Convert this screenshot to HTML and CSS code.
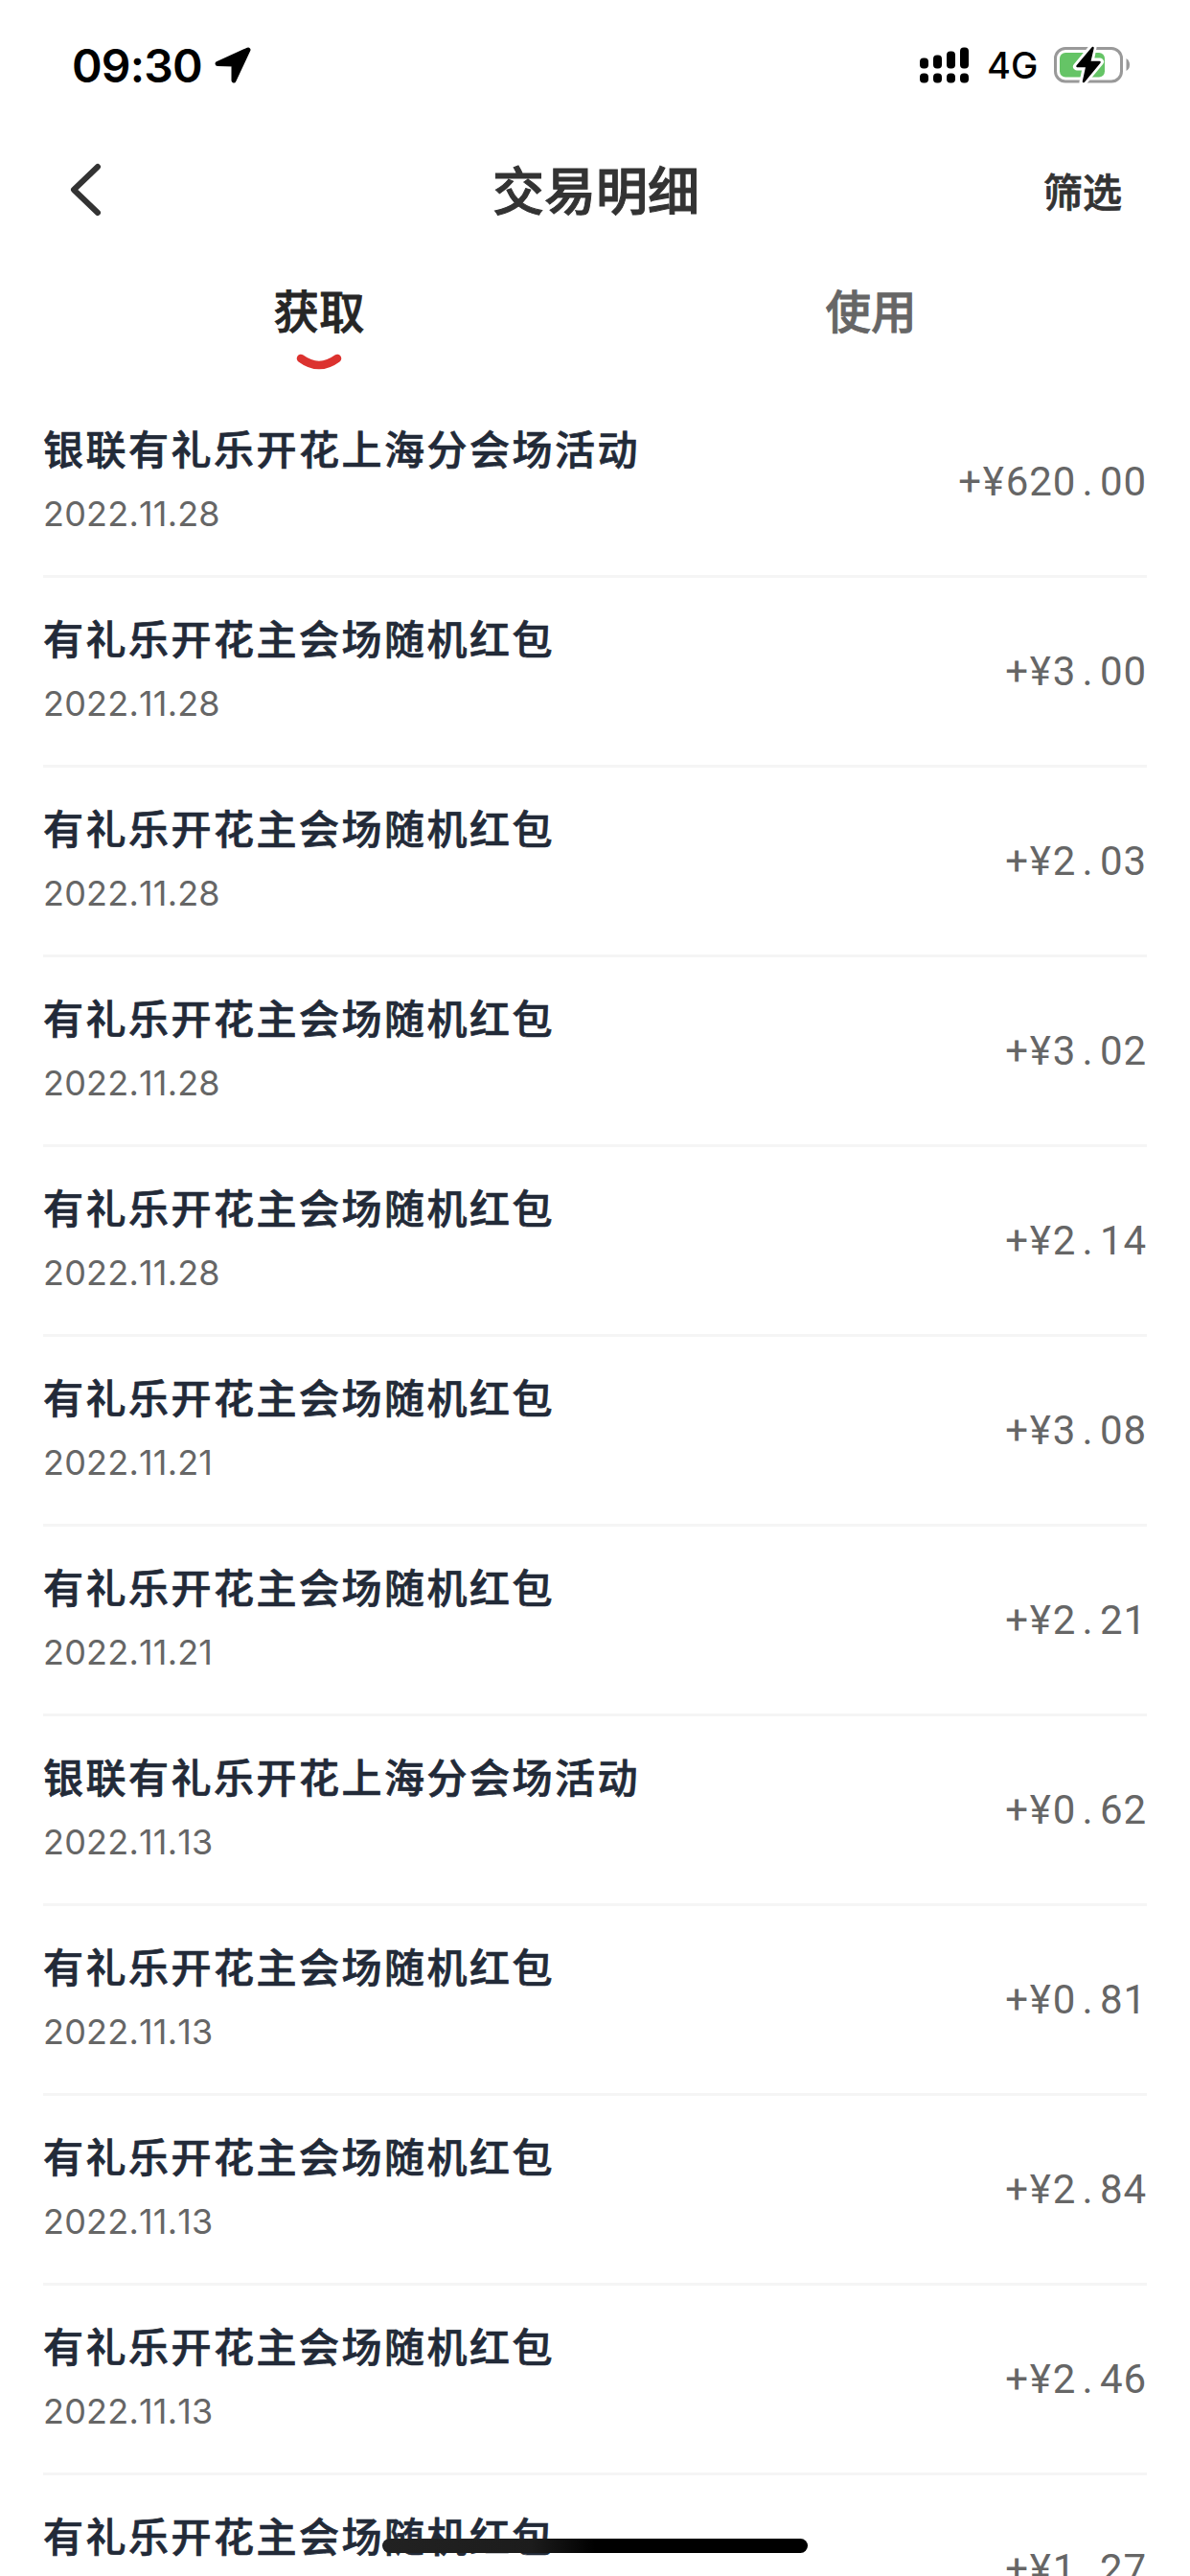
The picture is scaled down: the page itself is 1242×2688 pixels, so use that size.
FILE: index.html
```html
<!DOCTYPE html>
<html lang="zh-CN">
<head>
    <meta charset="UTF-8">
    <meta name="viewport" content="width=device-width, initial-scale=1.0">
    <title>交易明细</title>
    <link rel="stylesheet" href="styles.css">
</head>
<body>
    <div class="page">
        <div class="status-bar">
            <span class="time">09:30</span>
            <svg class="location" width="38" height="38" viewBox="0 0 38 38">
                <path d="M35 3 L20 35 L20 18 L3 17.5 Z" stroke="#000" stroke-width="5" stroke-linejoin="round"/>
            </svg>
            <svg class="signal" width="52" height="38" viewBox="0 0 52 38">
                <rect x="0" y="11.5" width="9" height="11" rx="4"/>
                <rect x="14" y="8.5" width="9" height="14" rx="4"/>
                <rect x="28" y="4.5" width="9" height="18" rx="4"/>
                <rect x="42" y="0.5" width="9" height="22" rx="4"/>
                <rect x="0" y="27.5" width="9" height="10" rx="4"/>
                <rect x="14" y="27.5" width="9" height="10" rx="4"/>
                <rect x="28" y="27.5" width="9" height="10" rx="4"/>
                <rect x="42" y="27.5" width="9" height="10" rx="4"/>
            </svg>
            <span class="network">4G</span>
            <svg class="battery" width="80" height="40" viewBox="0 0 80 40">
                <rect x="1.5" y="2.5" width="69" height="34.5" rx="10.5" fill="none" stroke="#999" stroke-width="3"/>
                <path d="M75.5 13 Q79 15 79 19.5 Q79 24 75.5 26 Z" fill="#999"/>
                <rect x="6" y="7" width="47" height="25.5" rx="6" fill="#65c466"/>
                <path d="M40.5 1.5 L24 21.5 L34 21.5 L30.5 37.5 L48 16.5 L37.5 16.5 Z" fill="#fff" stroke="#fff" stroke-width="8" stroke-linejoin="round"/>
                <path d="M40.5 2 L24.5 21 L34.5 21 L31 37 L47.5 17 L37 17 Z" stroke="#000" stroke-width="2.5" stroke-linejoin="round"/>
            </svg>
        </div>

        <div class="header">
            <svg class="back" width="34" height="58" viewBox="0 0 34 58">
                <path d="M29 5 L4 29 L29 53" fill="none" stroke="#333" stroke-width="6" stroke-linecap="round" stroke-linejoin="round"/>
            </svg>
            <h1>交易明细</h1>
            <span class="filter">筛选</span>
        </div>

        <div class="tabs">
            <div class="tab active">
                <span>获取</span>
                <svg width="48" height="20" viewBox="0 0 48 20">
                    <path d="M5 5 Q24 19 43 5" fill="none" stroke="#dc322f" stroke-width="8.5" stroke-linecap="round"/>
                </svg>
            </div>
            <div class="tab"><span>使用</span></div>
        </div>

        <ul class="list">
            <li class="item">
                <div class="info"><div class="name">银联有礼乐开花上海分会场活动</div><div class="date">2022.11.28</div></div>
                <div class="amount">+<i>¥</i>620<i>.</i>00</div>
            </li>
            <li class="item">
                <div class="info"><div class="name">有礼乐开花主会场随机红包</div><div class="date">2022.11.28</div></div>
                <div class="amount">+<i>¥</i>3<i>.</i>00</div>
            </li>
            <li class="item">
                <div class="info"><div class="name">有礼乐开花主会场随机红包</div><div class="date">2022.11.28</div></div>
                <div class="amount">+<i>¥</i>2<i>.</i>03</div>
            </li>
            <li class="item">
                <div class="info"><div class="name">有礼乐开花主会场随机红包</div><div class="date">2022.11.28</div></div>
                <div class="amount">+<i>¥</i>3<i>.</i>02</div>
            </li>
            <li class="item">
                <div class="info"><div class="name">有礼乐开花主会场随机红包</div><div class="date">2022.11.28</div></div>
                <div class="amount">+<i>¥</i>2<i>.</i>14</div>
            </li>
            <li class="item">
                <div class="info"><div class="name">有礼乐开花主会场随机红包</div><div class="date">2022.11.21</div></div>
                <div class="amount">+<i>¥</i>3<i>.</i>08</div>
            </li>
            <li class="item">
                <div class="info"><div class="name">有礼乐开花主会场随机红包</div><div class="date">2022.11.21</div></div>
                <div class="amount">+<i>¥</i>2<i>.</i>21</div>
            </li>
            <li class="item">
                <div class="info"><div class="name">银联有礼乐开花上海分会场活动</div><div class="date">2022.11.13</div></div>
                <div class="amount">+<i>¥</i>0<i>.</i>62</div>
            </li>
            <li class="item">
                <div class="info"><div class="name">有礼乐开花主会场随机红包</div><div class="date">2022.11.13</div></div>
                <div class="amount">+<i>¥</i>0<i>.</i>81</div>
            </li>
            <li class="item">
                <div class="info"><div class="name">有礼乐开花主会场随机红包</div><div class="date">2022.11.13</div></div>
                <div class="amount">+<i>¥</i>2<i>.</i>84</div>
            </li>
            <li class="item">
                <div class="info"><div class="name">有礼乐开花主会场随机红包</div><div class="date">2022.11.13</div></div>
                <div class="amount">+<i>¥</i>2<i>.</i>46</div>
            </li>
            <li class="item">
                <div class="info"><div class="name">有礼乐开花主会场随机红包</div></div>
                <div class="amount">+<i>¥</i>1<i>.</i>27</div>
            </li>
        </ul>

        <div class="home-indicator"></div>
    </div>
</body>
</html>
```

FILE: styles.css
```css
* {
    box-sizing: border-box;
}
body {
    margin: 0;
    background: #fff;
    font-family: "Inter", "Noto Sans CJK SC", sans-serif;
}
.page {
    position: relative;
    width: 1242px;
    height: 2688px;
    overflow: hidden;
}

/* Status bar */
.status-bar {
    display: flex;
    align-items: center;
    height: 136px;
    padding: 0 62px 0 75px;
}
.time {
    width: 149px;
    font-size: 48px;
    font-weight: 600;
    letter-spacing: -0.8px;
    white-space: nowrap;
}
.signal {
    margin-left: auto;
}
.network {
    width: 70px;
    margin-left: 18px;
    font-size: 38px;
    font-weight: 500;
}

/* Title row */
.header {
    display: grid;
    grid-template-columns: 1fr auto 1fr;
    align-items: center;
    height: 128px;
    padding: 0 71px 4px 73px;
    color: #333;
    font-family: "Noto Sans CJK SC", sans-serif;
}
.header h1 {
    margin: 0 0 3px;
    font-size: 54px;
    line-height: 80px;
    font-weight: 500;
    -webkit-text-stroke: 1px #333;
}
.filter {
    justify-self: end;
    font-size: 41px;
    line-height: 60px;
    font-weight: 500;
    -webkit-text-stroke: 0.8px #333;
}

/* Tabs */
.tabs {
    display: grid;
    grid-template-columns: 1fr 1fr;
    height: 141px;
    padding: 24px 45px 0;
}
.tab {
    display: flex;
    flex-direction: column;
    align-items: center;
    color: #666;
    font-family: "Noto Sans CJK SC", sans-serif;
    font-size: 47.5px;
    line-height: 70px;
    font-weight: 500;
    -webkit-text-stroke: 0.8px currentColor;
}
.tab svg {
    margin-top: 11px;
}
.active {
    color: #262626;
}

/* Transactions */
.list {
    margin: 0;
    padding: 0 45px;
    list-style: none;
}
.item {
    display: flex;
    justify-content: space-between;
    height: 198px;
    border-bottom: 3px solid #f5f5f5;
}
.info {
    padding-top: 32px;
}
.name {
    color: #222a38;
    font-family: "Noto Sans CJK SC", sans-serif;
    font-size: 42px;
    line-height: 60px;
    font-weight: 500;
    letter-spacing: 2.5px;
    -webkit-text-stroke: 0.7px #222a38;
}
.date {
    margin-top: 14px;
    color: #666;
    font-size: 36px;
    line-height: 50px;
    font-kerning: none;
    letter-spacing: 0.2px;
}
.amount {
    align-self: center;
    color: #666;
    font-family: "Roboto", sans-serif;
    font-size: 42px;
    line-height: 60px;
    letter-spacing: 0.9px;
}
.amount i {
    display: inline-block;
    width: 24.8px;
    font-style: normal;
    text-align: center;
}

/* iOS home bar over the list */
.home-indicator {
    position: absolute;
    left: 399px;
    bottom: 24px;
    width: 444px;
    height: 15px;
    border-radius: 8px;
    background: linear-gradient(90deg, #222 0%, #1c1c1c 35%, #000 50%);
}
```
